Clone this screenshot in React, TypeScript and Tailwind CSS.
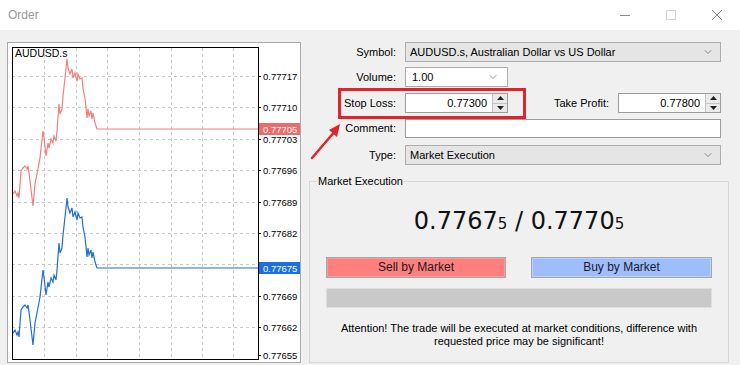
import { ChevronDown } from 'lucide-react';

// blue price path, page coordinates; the red one is the same shape 139px higher
const path: [number, number][] = [
  [13, 333], [15, 330], [17, 335], [18, 332], [19, 337], [21, 310], [23, 307], [25, 305],
  [27, 308], [28, 305], [29, 312], [33, 345], [35, 323], [37, 313], [40, 297], [43, 270],
  [44, 277], [46, 295], [48, 282], [49, 287], [51, 278], [53, 282], [54, 275], [56, 280],
  [57, 270], [59, 243], [60, 253], [62, 248], [63, 235], [65, 217], [67, 198], [68, 207],
  [70, 213], [72, 208], [73, 217], [75, 212], [77, 220], [78, 213], [80, 218], [82, 217],
  [83, 227], [85, 237], [87, 257], [88, 248], [89, 255], [91, 250], [92, 258], [93, 252],
  [95, 262], [97, 268], [258, 268],
];

const levels = [
  { y: 76, label: '0.77717' },
  { y: 107, label: '0.77710' },
  { y: 139, label: '0.77703' },
  { y: 170, label: '0.77696' },
  { y: 202, label: '0.77689' },
  { y: 233, label: '0.77682' },
  { y: 264, label: '' }, // hidden under the bid label
  { y: 296, label: '0.77669' },
  { y: 327, label: '0.77662' },
  { y: 355, label: '0.77655' },
];

const cols = [44, 76, 107, 139, 171, 202, 233];

function Chart() {
  const pts = (dy: number) => path.map(([x, y]) => `${x},${y + dy}`).join(' ');
  return (
    <div className="h-[321px] w-[294px] border border-[#a9a9a9] bg-white">
      <svg width="292" height="319" viewBox="8 43 292 319" fontFamily="Liberation Sans, Arial, sans-serif">
        {levels.slice(0, 9).map((l) => (
          <line key={l.y} x1="12" x2="258" y1={l.y + 0.5} y2={l.y + 0.5} stroke="#c8c8c8" strokeDasharray="3 3" />
        ))}
        {cols.map((x) => (
          <line key={x} x1={x + 0.5} x2={x + 0.5} y1="48" y2="359" stroke="#c8c8c8" strokeDasharray="3 3" />
        ))}
        <polyline points={pts(-139)} fill="none" stroke="#f08080" strokeWidth="1.2" />
        <polyline points={pts(0)} fill="none" stroke="#1f6fd6" strokeWidth="1.2" />
        <rect x="12.5" y="47.5" width="246" height="312" fill="none" stroke="#000" />
        <text x="15" y="57" fontSize="10.5" fill="#000">AUDUSD.s</text>
        {levels.map((l) => (
          <g key={l.y}>
            <line x1="258" x2="261" y1={l.y + 0.5} y2={l.y + 0.5} stroke="#000" />
            {l.label && (
              <text x="263" y={l.y + 3.5} fontSize="9.5" fill="#000">{l.label}</text>
            )}
          </g>
        ))}
        <rect x="259" y="123" width="41" height="12" fill="#ee6b6b" />
        <text x="263" y="132.5" fontSize="9.5" fill="#fff">0.77705</text>
        <rect x="259" y="262" width="41" height="12" fill="#1a6fe6" />
        <text x="263" y="271.5" fontSize="9.5" fill="#fff">0.77675</text>
      </svg>
    </div>
  );
}

function Spin() {
  return (
    <div className="flex w-[15px] flex-col border-l border-[#c4c4c4]">
      <div className="flex flex-1 items-center justify-center border-b border-[#c4c4c4] bg-[#eaeaea]">
        <svg width="7" height="4"><path d="M3.5 0L7 4H0Z" fill="#222" /></svg>
      </div>
      <div className="flex flex-1 items-center justify-center bg-[#eaeaea]">
        <svg width="7" height="4"><path d="M0 0H7L3.5 4Z" fill="#222" /></svg>
      </div>
    </div>
  );
}

function Field({ value }: { value: string }) {
  return (
    <div className="flex h-[20px] w-[103px] shrink-0 border border-[#9c9c9c] bg-white">
      <span className="flex flex-1 items-center justify-end pr-[5px]">{value}</span>
      <Spin />
    </div>
  );
}

function Select({ value, className }: { value: string; className: string }) {
  return (
    <div className={`flex h-[20px] items-center border border-[#adadad] pl-[4px] pr-[6px] ${className}`}>
      <span className="flex-1">{value}</span>
      <ChevronDown size={12} strokeWidth={1.3} className="text-[#555]" />
    </div>
  );
}

function Label({ text }: { text: string }) {
  return <span className="w-[87px] shrink-0 text-right">{text}</span>;
}

export default function App() {
  return (
    <div className="h-[365px] w-[740px] overflow-hidden bg-[#f0f0f0] font-['Liberation_Sans',Arial,sans-serif] text-[11px] text-black">
      <div className="flex h-[30px] items-center bg-white pl-[8px]">
        <span className="text-[12px] text-[#9a9a9a]">Order</span>
        <div className="ml-auto flex h-full">
          <div className="flex w-[46px] items-center justify-center">
            <div className="h-px w-[10px] bg-[#8c8c8c]" />
          </div>
          <div className="flex w-[46px] items-center justify-center">
            <div className="h-[10px] w-[10px] border border-[#d4d4d4]" />
          </div>
          <div className="flex w-[46px] items-center justify-center">
            <svg width="10" height="10"><path d="M0 0L10 10M10 0L0 10" stroke="#8c8c8c" strokeWidth="1" /></svg>
          </div>
        </div>
      </div>

      <div className="relative flex h-[335px]">
        <div className="ml-[7px] mt-[12px]">
          <Chart />
        </div>

        <div className="flex min-w-0 flex-1 flex-col pl-[8px] pr-[11px]">
          <div className="flex flex-col pr-[8px]">
            <div className="mt-[12px] flex h-[20px] items-center gap-[9px]">
              <Label text="Symbol:" />
              <Select value="AUDUSD.s, Australian Dollar vs US Dollar" className="flex-1 bg-[#e5e5e5]" />
            </div>
            <div className="mt-[5px] flex h-[20px] items-center gap-[9px]">
              <Label text="Volume:" />
              <Select value="1.00" className="w-[103px] bg-white pl-[6px] pr-[8px]" />
            </div>
            <div className="mt-[6px] flex h-[20px] items-center gap-[9px]">
              <Label text="Stop Loss:" />
              <Field value="0.77300" />
              <span className="flex-1 text-right">Take Profit:</span>
              <Field value="0.77800" />
            </div>
            <div className="mt-[6px] flex h-[19px] items-center gap-[9px]">
              <Label text="Comment:" />
              <div className="h-full flex-1 border border-[#9c9c9c] bg-white" />
            </div>
            <div className="mt-[7px] flex h-[20px] items-center gap-[9px]">
              <Label text="Type:" />
              <Select value="Market Execution" className="flex-1 bg-[#e5e5e5]" />
            </div>
          </div>

          <fieldset className="mt-[8px] h-[190px] min-w-0 border border-[#d6d6d6]">
            <legend className="ml-[7px] px-[1px] text-[11px]">Market Execution</legend>
            <div className="px-[16px]">
              <div className="mt-[17px] flex items-baseline justify-center font-['DejaVu_Sans',sans-serif] text-[24px] leading-[28px] text-[#111]">
                0.7767<span className="text-[15px]">5</span>&nbsp;/ 0.7770<span className="text-[15px]">5</span>
              </div>
              <div className="mt-[19px] flex justify-between">
                <button className="h-[21px] w-[180px] border border-[#a8a8a8] bg-[#ff7f7f] text-[12px] text-[#1a1a1a] shadow-[inset_0_0_0_1px_#f39a9a]">
                  Sell by Market
                </button>
                <button className="h-[21px] w-[181px] border border-[#a8a8a8] bg-[#9ebdfb] text-[12px] text-[#1a1a2a] shadow-[inset_0_0_0_1px_#b9cffb]">
                  Buy by Market
                </button>
              </div>
              <div className="mt-[10px] h-[20px] border border-[#dedede] bg-[#c9c9c9]" />
              <p className="mt-[14px] text-center text-[11px] leading-[13px]">
                Attention! The trade will be executed at market conditions, difference with
                <br />
                requested price may be significant!
              </p>
            </div>
          </fieldset>
        </div>

        {/* highlight round the stop loss */}
        <div className="absolute left-[338px] top-[58px] h-[31px] w-[188px] border-[3px] border-[#e1232b]" />
        <svg className="absolute left-[306px] top-[90px]" width="40" height="42">
          <path d="M6 38L30 10" stroke="#e1232b" strokeWidth="2.5" strokeLinecap="round" />
          <path d="M34 4L23 10L31 17Z" fill="#e1232b" />
        </svg>
      </div>
    </div>
  );
}
